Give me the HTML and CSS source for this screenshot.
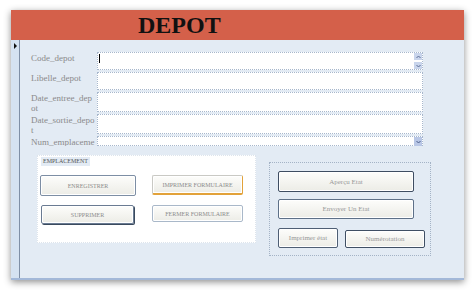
FILE: index.html
```html
<!DOCTYPE html>
<html lang="fr">
<head>
  <meta charset="UTF-8">
  <title>DEPOT</title>
  <link rel="stylesheet" href="styles.css">
</head>
<body>
  <div class="window">
    <div class="header">
      <h1>DEPOT</h1>
    </div>
    <div class="body">
      <div class="selector">
        <span class="arrow"></span>
      </div>
      <div class="content">
        <div class="fields">
          <div class="row row-md">
            <label>Code_depot</label>
            <div class="field">
              <span class="caret"></span>
              <span class="spin">
                <span class="spin-btn"><svg width="5" height="4" viewBox="0 0 5 4"><path d="M0.5 3 L2.5 1 L4.5 3" fill="none" stroke="#5a6c96" stroke-width="1"/></svg></span>
                <span class="spin-btn"><svg width="5" height="4" viewBox="0 0 5 4"><path d="M0.5 1 L2.5 3 L4.5 1" fill="none" stroke="#5a6c96" stroke-width="1"/></svg></span>
              </span>
            </div>
          </div>
          <div class="row row-md">
            <label>Libelle_depot</label>
            <div class="field"></div>
          </div>
          <div class="row row-lg">
            <label>Date_entree_dep<wbr>ot</label>
            <div class="field"></div>
          </div>
          <div class="row row-lg">
            <label>Date_sortie_depo<wbr>t</label>
            <div class="field"></div>
          </div>
          <div class="row row-sm">
            <label class="clip">Num_emplaceme</label>
            <div class="field">
              <span class="combo-btn"><svg width="5" height="4" viewBox="0 0 5 4"><path d="M0.5 1 L2.5 3 L4.5 1" fill="none" stroke="#4a5c8a" stroke-width="1"/></svg></span>
            </div>
          </div>
        </div>

        <div class="lower">
          <div class="group">
            <div class="group-title">EMPLACEMENT</div>
            <div class="btn-row">
              <button class="btn caps btn-save">ENREGISTRER</button>
              <button class="btn caps btn-print focused">IMPRIMER FORMULAIRE</button>
            </div>
            <div class="btn-row">
              <button class="btn caps btn-delete">SUPPRIMER</button>
              <button class="btn caps btn-close light">FERMER FORMULAIRE</button>
            </div>
          </div>

          <div class="reports">
            <button class="btn wide">Aperçu Etat</button>
            <button class="btn wide mid">Envoyer Un Etat</button>
            <div class="btn-row">
              <button class="btn btn-small">Imprimer état</button>
              <button class="btn btn-num">Numérotation</button>
            </div>
          </div>
        </div>
      </div>
    </div>
  </div>
</body>
</html>
```

FILE: styles.css
```css
body {
  margin: 0;
  padding: 10px 9px 10px 11px;
  background-color: #fff;
  font-family: 'Liberation Serif', serif;
}

.window {
  width: 453px;
  height: 270px;
  display: flex;
  flex-direction: column;
  box-shadow: 0 2px 7px rgba(0, 0, 0, 0.45);
}

.header {
  height: 30px;
  background-color: #d4604a;
}

h1 {
  margin: 0;
  padding-left: 127px;
  font-size: 24px;
  line-height: 30px;
  font-weight: bold;
  color: #111;
}

.body {
  flex: 1;
  display: flex;
  border-bottom: 2px solid #a3b8d8;
}

.selector {
  width: 8px;
  background-color: #d5e2f1;
  border-right: 1px solid #7f8fa6;
}

.arrow {
  display: block;
  margin: 3px 0 0 3px;
  width: 0;
  height: 0;
  border-top: 3px solid transparent;
  border-bottom: 3px solid transparent;
  border-left: 3px solid #111;
}

.content {
  flex: 1;
  background-color: #e3ebf4;
  padding: 12px 0 0 11px;
}

/* text fields */
.fields {
  display: flex;
  flex-direction: column;
  gap: 2px;
}

.row {
  display: flex;
}

.row-md { height: 18px; }
.row-lg { height: 20px; }
.row-sm { height: 10px; }

.row label {
  width: 64px;
  margin-right: 2px;
  padding-top: 1px;
  font-size: 9px;
  line-height: 10px;
  color: #8a8a8a;
}

.row label.clip {
  white-space: nowrap;
  overflow: hidden;
}

.field {
  position: relative;
  width: 324px;
  background-color: #fff;
  border: 1px dotted #a7b7cc;
}

.caret {
  position: absolute;
  left: 1px;
  top: 1px;
  width: 1px;
  height: 9px;
  background-color: #000;
}

.spin {
  position: absolute;
  right: 0;
  top: 0;
  display: flex;
  flex-direction: column;
  gap: 2px;
}

.spin-btn,
.combo-btn {
  display: flex;
  align-items: center;
  justify-content: center;
  width: 8px;
  height: 7px;
  background-color: #c9d5ec;
}

.combo-btn {
  position: absolute;
  right: 0;
  top: 0;
  height: 9px;
  background-color: #b9c7e6;
}

/* lower part */
.lower {
  display: flex;
  align-items: flex-start;
  gap: 13px;
  margin: 9px 0 0 6px;
}

.group {
  width: 215px;
  height: 86px;
  background-color: #fff;
  border: 1px dotted #dde4ec;
  padding: 0 0 0 2px;
  display: flex;
  flex-direction: column;
  align-items: flex-start;
  gap: 9px;
}

.group-title {
  margin: 1px 0 0 1px;
  padding: 0 2px;
  background-color: #e3ebf4;
  font-size: 6px;
  line-height: 9px;
  color: #555;
}

.btn-row {
  display: flex;
  align-items: flex-start;
  gap: 16px;
}

.btn {
  margin: 0;
  padding: 0;
  font-family: 'Liberation Serif', serif;
  font-size: 7px;
  color: #999;
  background: linear-gradient(#fdfdfb, #ecece6);
  border: 1px solid #4a5a70;
  border-radius: 2px;
  box-shadow: inset 0 0 0 1px #fff;
}

.caps {
  font-size: 6px;
  color: #8c8c8c;
}

.btn-save {
  width: 96px;
  height: 21px;
  border-color: #7d8ea4;
}

.btn-print {
  width: 91px;
  height: 20px;
}

.btn.focused {
  border-color: #c9c9c4;
  border-bottom: 2px solid #e2a23a;
  border-right: 1px solid #e2a23a;
}

.btn-delete {
  width: 93px;
  height: 19px;
  margin-left: 1px;
  border-color: #6a7b92;
  box-shadow: 1px 1px 0 #3a4a5e, inset 0 0 0 1px #fff;
}

.btn-close {
  width: 91px;
  height: 17px;
  margin-left: 2px;
}

.btn.light {
  border-color: #a9b8c9;
}

.reports {
  width: 152px;
  height: 84px;
  margin-top: 7px;
  border: 1px dotted #a4b3c6;
  padding: 8px 0 0 8px;
  display: flex;
  flex-direction: column;
  gap: 7px;
}

.reports .btn.wide {
  width: 136px;
  height: 21px;
  border-color: #3e4d62;
}

.reports .btn.mid {
  height: 20px;
  border-color: #5d7088;
}

.reports .btn-row {
  gap: 7px;
  margin-top: 2px;
}

.btn-small {
  width: 60px;
  height: 20px;
  border-color: #4e5e74;
}

.btn-num {
  width: 80px;
  height: 18px;
  margin-top: 2px;
  border-color: #3f4f64;
}
```
